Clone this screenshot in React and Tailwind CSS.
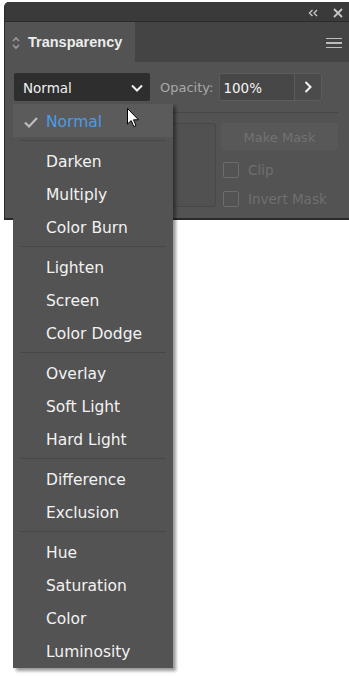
import React from 'react';

const GROUPS = [
  ['Normal'],
  ['Darken', 'Multiply', 'Color Burn'],
  ['Lighten', 'Screen', 'Color Dodge'],
  ['Overlay', 'Soft Light', 'Hard Light'],
  ['Difference', 'Exclusion'],
  ['Hue', 'Saturation', 'Color', 'Luminosity'],
];

const FONT = { fontFamily: '"DejaVu Sans", Verdana, sans-serif' };

function BlendMenu() {
  return (
    <div
      className="absolute left-[13px] top-[103px] w-[160px] bg-[#535353] pt-[1px] pb-[1px] shadow-[3px_3px_3px_rgba(0,0,0,0.4)]"
      style={FONT}
    >
      {GROUPS.map((group, gi) => (
        <div key={gi}>
          {gi > 0 && (
            <div className="h-[7px] flex items-center px-[7px]">
              <div className="h-px w-full bg-[#474747]" />
            </div>
          )}
          {group.map((item) => {
            const selected = item === 'Normal';
            return (
              <div
                key={item}
                className={`h-[33px] flex items-center text-[15.5px] leading-none pt-[5px] ${
                  selected ? 'bg-[#5b5b5b] text-[#4b9ce6]' : 'text-[#f2f2f2]'
                }`}
              >
                <span className="w-[33px] flex justify-center">
                  {selected && (
                    <svg width="14" height="11" viewBox="0 0 14 11" className="ml-[3px] -mt-[2px]">
                      <path d="M1 5.5 L5 9.5 L13 1" fill="none" stroke="#bcbcbc" strokeWidth="2.2" />
                    </svg>
                  )}
                </span>
                <span>{item}</span>
              </div>
            );
          })}
        </div>
      ))}
    </div>
  );
}

function Cursor() {
  return (
    <svg className="absolute left-[127px] top-[108px]" width="13" height="20" viewBox="0 0 13 20">
      <path
        d="M0.5 0.5 L0.5 16 L4.2 12.6 L6.8 18.6 L9 17.6 L6.5 11.8 L11.5 11.8 Z"
        fill="#ffffff"
        stroke="#000000"
        strokeWidth="1"
        strokeLinejoin="round"
      />
    </svg>
  );
}

export default function App() {
  return (
    <div className="relative w-[349px] h-[677px] bg-white overflow-hidden" style={FONT}>
      <div className="ml-[4px] mt-[2px] w-[345px] rounded-tl-[5px] overflow-hidden border-l border-b-2 border-[#2a2a2a] bg-[#535353]">
        {/* header strip */}
        <div className="h-[20px] bg-[#3a3a3a] flex items-center justify-end gap-[15px] pr-[6px] pt-[2px] border-b border-[#2a2a2a]">
          <svg width="10" height="8" viewBox="0 0 10 8">
            <path d="M4.5 1 L1.5 4 L4.5 7 M9 1 L6 4 L9 7" fill="none" stroke="#c6c6c6" strokeWidth="1.4" />
          </svg>
          <svg width="10" height="10" viewBox="0 0 10 10">
            <path d="M1 1 L9 9 M9 1 L1 9" fill="none" stroke="#c6c6c6" strokeWidth="1.8" />
          </svg>
        </div>

        {/* tab strip */}
        <div className="h-[40px] bg-[#444444] flex">
          <div className="w-[130px] bg-[#535353] flex items-center pl-[7px] pt-[2px] gap-[8px]">
            <svg width="8" height="14" viewBox="0 0 8 14">
              <path d="M1 5 L4 2 L7 5 M1 9 L4 12 L7 9" fill="none" stroke="#9a9a9a" strokeWidth="1.6" />
            </svg>
            <span
              className="text-[14.5px] font-bold text-[#ececec]"
              style={{ fontFamily: '"Liberation Sans", Arial, sans-serif' }}
            >
              Transparency
            </span>
          </div>
          <div className="flex-1 flex items-center justify-end pr-[7px] pt-[2px]">
            <div className="w-[16px] flex flex-col gap-[3px]">
              <div className="h-[1.5px] bg-[#bdbdbd]" />
              <div className="h-[1.5px] bg-[#bdbdbd]" />
              <div className="h-[1.5px] bg-[#bdbdbd]" />
            </div>
          </div>
        </div>

        {/* content */}
        <div className="h-[156px] px-[9px] pt-[11px]">
          <div className="flex items-center h-[28px]">
            <div className="w-[136px] h-[28px] bg-[#2e2e2e] rounded-[2px] flex items-center justify-between pl-[9px] pr-[7px] pt-[2px]">
              <span className="text-[13.5px] text-[#f0f0f0]">Normal</span>
              <svg width="12" height="8" viewBox="0 0 12 8">
                <path d="M1 1.5 L6 6.5 L11 1.5" fill="none" stroke="#f0f0f0" strokeWidth="2" />
              </svg>
            </div>
            <span className="ml-[10px] pt-[2px] text-[13px] text-[#a9a9a9]">Opacity:</span>
            <div className="ml-[6px] flex h-[28px] rounded-[3px] border border-[#5c5c5c] overflow-hidden">
              <div className="w-[75px] bg-[#474747] flex items-center pl-[3px] pt-[2px] border-r border-[#5c5c5c]">
                <span className="text-[13.5px] text-[#f4f4f4]">100%</span>
              </div>
              <div className="w-[26px] bg-[#4b4b4b] flex items-center justify-center">
                <svg width="8" height="12" viewBox="0 0 8 12">
                  <path d="M1.5 1 L6.5 6 L1.5 11" fill="none" stroke="#f4f4f4" strokeWidth="2" />
                </svg>
              </div>
            </div>
          </div>

          <div className="mt-[11px] h-px bg-[#474747] mr-[2px]" />

          <div className="flex mt-[10px]">
            <div className="w-[202px] flex justify-end">
              <div className="w-[90px] h-[84px] border border-[#474747] rounded-[3px] bg-[#515151]" />
            </div>
            <div className="ml-[5px] flex flex-col">
              <div className="w-[117px] h-[27px] bg-[#585858] rounded-[2px] flex items-center justify-center pt-[2px] text-[13px] text-[#727272]">
                Make Mask
              </div>
              <div className="flex items-center h-[16px] mt-[12px] ml-[2px] gap-[9px]">
                <div className="w-[16px] h-[16px] border border-[#6c6c6c] rounded-[2px]" />
                <span className="text-[13.5px] text-[#6f6f6f]">Clip</span>
              </div>
              <div className="flex items-center h-[16px] mt-[13px] ml-[2px] gap-[9px]">
                <div className="w-[16px] h-[16px] border border-[#6c6c6c] rounded-[2px]" />
                <span className="text-[13.5px] text-[#6f6f6f]">Invert Mask</span>
              </div>
            </div>
          </div>
        </div>
      </div>

      <BlendMenu />
      <Cursor />
    </div>
  );
}
